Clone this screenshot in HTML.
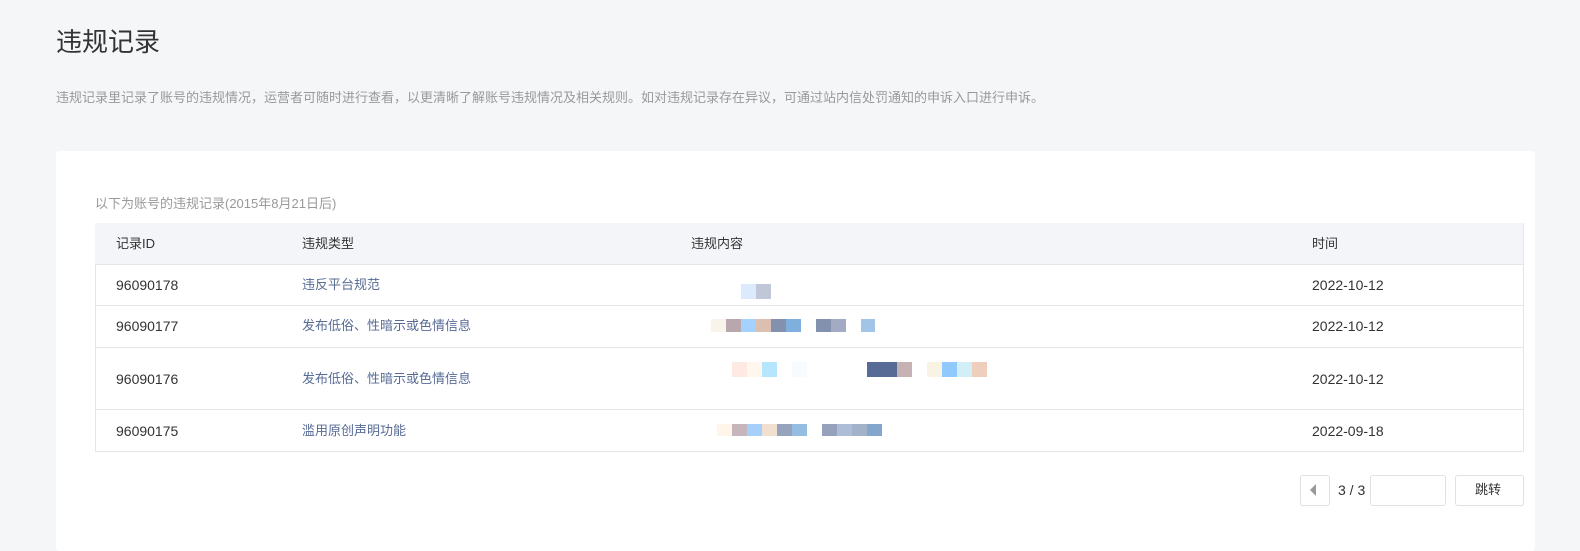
<!DOCTYPE html>
<html><head><meta charset="utf-8"><style>
body{margin:0;width:1580px;height:543px;background:#f5f6f8;font-family:"Liberation Sans","Noto Sans CJK SC",sans-serif;position:relative;overflow:hidden}
.a{position:absolute}
h1{position:absolute;left:56px;top:22px;margin:0;font-size:26px;font-weight:normal;color:#333}
.desc{left:56px;top:87px;font-size:13px;color:#999}
.card{left:56px;top:151px;width:1479px;height:400px;background:#fff;border-radius:3px}
.sub{left:95px;top:193px;font-size:13px;color:#999}
.tbl{left:95px;top:223px;width:1427px;height:227px;border:1px solid #e4e6eb}
.hd{left:95px;top:223px;width:1428px;height:41px;background:#f4f5f9;border-bottom:1px solid #e4e6eb}
.ln{left:96px;width:1427px;height:1px;background:#e4e6eb}
.t{font-size:14px;color:#333;line-height:16px}
.l{font-size:13px;color:#576b95;line-height:16px}
.b{position:absolute;width:15px}
.btn{border:1px solid #e0e1e4;border-radius:3px;background:#fff}
</style></head><body>
<h1>违规记录</h1>
<div class="a desc">违规记录里记录了账号的违规情况，运营者可随时进行查看，以更清晰了解账号违规情况及相关规则。如对违规记录存在异议，可通过站内信处罚通知的申诉入口进行申诉。</div>
<div class="a card"></div>
<div class="a sub">以下为账号的违规记录(2015年8月21日后)</div>
<div class="a tbl"></div>
<div class="a hd"></div>
<div class="a ln" style="top:305px"></div>
<div class="a ln" style="top:347px"></div>
<div class="a ln" style="top:409px"></div>
<div class="a t" style="left:116px;top:236px;font-size:13px">记录ID</div>
<div class="a t" style="left:302px;top:236px;font-size:13px">违规类型</div>
<div class="a t" style="left:691px;top:236px;font-size:13px">违规内容</div>
<div class="a t" style="left:1312px;top:236px;font-size:13px">时间</div>

<div class="a t" style="left:116px;top:277px">96090178</div>
<div class="a l" style="left:302px;top:277px">违反平台规范</div>
<div class="a t" style="left:1312px;top:277px">2022-10-12</div>
<div class="a t" style="left:116px;top:318px">96090177</div>
<div class="a l" style="left:302px;top:318px">发布低俗、性暗示或色情信息</div>
<div class="a t" style="left:1312px;top:318px">2022-10-12</div>
<div class="a t" style="left:116px;top:371px">96090176</div>
<div class="a l" style="left:302px;top:371px">发布低俗、性暗示或色情信息</div>
<div class="a t" style="left:1312px;top:371px">2022-10-12</div>
<div class="a t" style="left:116px;top:423px">96090175</div>
<div class="a l" style="left:302px;top:423px">滥用原创声明功能</div>
<div class="a t" style="left:1312px;top:423px">2022-09-18</div>

<div style="position:absolute;top:284px;height:15px">
<div class="b" style="left:741px;height:15px;background:#dbeafc"></div><div class="b" style="left:756px;height:15px;background:#c0c7d6"></div></div>
<div style="position:absolute;left:0;top:319px">
<div class="b" style="left:711px;height:13px;background:#f8f4e9"></div><div class="b" style="left:726px;height:13px;background:#b9a7ae"></div><div class="b" style="left:741px;height:13px;background:#a4d1fd"></div><div class="b" style="left:756px;height:13px;background:#dbbfb0"></div><div class="b" style="left:771px;height:13px;background:#8391ae"></div><div class="b" style="left:786px;height:13px;background:#7fafdc"></div><div class="b" style="left:816px;height:13px;background:#8391ae"></div><div class="b" style="left:831px;height:13px;background:#a3abc4"></div><div class="b" style="left:861px;height:13px;width:14px;background:#a2c4e7"></div></div>
<div style="position:absolute;left:0;top:362px">
<div class="b" style="left:732px;height:15px;background:#feeae2"></div><div class="b" style="left:747px;height:15px;background:#fff7ee"></div><div class="b" style="left:762px;height:15px;background:#b5e6fe"></div><div class="b" style="left:792px;height:15px;background:#f8fbfe"></div><div class="b" style="left:867px;height:15px;width:30px;background:#586b96"></div><div class="b" style="left:897px;height:15px;background:#c6b1b3"></div><div class="b" style="left:927px;height:15px;background:#f8f3e2"></div><div class="b" style="left:942px;height:15px;background:#90c9fe"></div><div class="b" style="left:957px;height:15px;background:#d2eef6"></div><div class="b" style="left:972px;height:15px;background:#eecebd"></div></div>
<div style="position:absolute;left:0;top:424px">
<div class="b" style="left:717px;height:12px;background:#fff5e8"></div><div class="b" style="left:732px;height:12px;background:#c6b6bc"></div><div class="b" style="left:747px;height:12px;background:#a7cffb"></div><div class="b" style="left:762px;height:12px;background:#f1dfcf"></div><div class="b" style="left:777px;height:12px;background:#95a3bd"></div><div class="b" style="left:792px;height:12px;background:#95bde2"></div><div class="b" style="left:822px;height:12px;background:#96a1bc"></div><div class="b" style="left:837px;height:12px;background:#adbdd7"></div><div class="b" style="left:852px;height:12px;background:#a2b2c8"></div><div class="b" style="left:867px;height:12px;background:#84a6cc"></div></div>

<div class="a btn" style="left:1300px;top:475px;width:28px;height:29px"></div>
<div class="a" style="left:1310px;top:484px;width:0;height:0;border-top:6px solid transparent;border-bottom:6px solid transparent;border-right:6px solid #999"></div>
<div class="a t" style="left:1338px;top:482px;font-size:14px">3 / 3</div>
<div class="a btn" style="left:1370px;top:475px;width:74px;height:29px"></div>
<div class="a btn" style="left:1455px;top:475px;width:67px;height:29px"></div>
<div class="a t" style="left:1475px;top:482px;font-size:13px">跳转</div>
</body></html>
